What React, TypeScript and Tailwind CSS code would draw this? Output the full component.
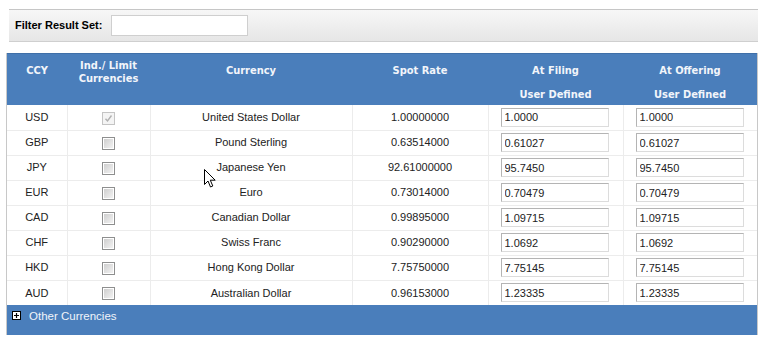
import React from "react";

type Row = {
  ccy: string;
  name: string;
  spot: string;
  filing: string;
  offering: string;
  checked?: boolean;
};

const rows: Row[] = [
  { ccy: "USD", name: "United States Dollar", spot: "1.00000000", filing: "1.0000", offering: "1.0000", checked: true },
  { ccy: "GBP", name: "Pound Sterling", spot: "0.63514000", filing: "0.61027", offering: "0.61027" },
  { ccy: "JPY", name: "Japanese Yen", spot: "92.61000000", filing: "95.7450", offering: "95.7450" },
  { ccy: "EUR", name: "Euro", spot: "0.73014000", filing: "0.70479", offering: "0.70479" },
  { ccy: "CAD", name: "Canadian Dollar", spot: "0.99895000", filing: "1.09715", offering: "1.09715" },
  { ccy: "CHF", name: "Swiss Franc", spot: "0.90290000", filing: "1.0692", offering: "1.0692" },
  { ccy: "HKD", name: "Hong Kong Dollar", spot: "7.75750000", filing: "7.75145", offering: "7.75145" },
  { ccy: "AUD", name: "Australian Dollar", spot: "0.96153000", filing: "1.23335", offering: "1.23335" },
];

function Check({ checked }: { checked?: boolean }) {
  if (checked) {
    return (
      <span className="inline-flex h-[13px] w-[13px] items-center justify-center border border-[#c4c4c4] bg-[#f4f4f4] align-middle">
        <svg width="9" height="9" viewBox="0 0 9 9">
          <path d="M1.5 4.8 L3.5 7 L7.5 1.5" fill="none" stroke="#b0b0b0" strokeWidth="1.4" />
        </svg>
      </span>
    );
  }
  return (
    <span className="inline-block h-[13px] w-[13px] border border-[#8e8f8f] bg-white p-[1px] align-middle">
      <span className="block h-full w-full bg-gradient-to-br from-[#cfcfcf] to-[#f2f2f2]" />
    </span>
  );
}

function RateInput({ value }: { value: string }) {
  return (
    <input
      readOnly
      value={value}
      className="h-[19px] w-[108px] border border-[#b4b4b4] border-b-[#dcdcdc] border-r-[#dcdcdc] bg-white px-[3px] text-[11px] text-[#222] outline-none"
      style={{ fontFamily: '"Liberation Sans", Arial, sans-serif' }}
    />
  );
}

const hd = '"DejaVu Sans Condensed", "DejaVu Sans", Verdana, sans-serif';

export default function App() {
  return (
    <div
      className="relative h-[342px] w-[766px] overflow-hidden bg-white text-[11px] text-[#222]"
      style={{ fontFamily: '"Liberation Sans", Arial, sans-serif' }}
    >
      {/* filter bar */}
      <div className="ml-[9px] mt-[9px] flex h-[33px] w-[749px] items-center gap-[9px] border-y border-t-[#c6c6c6] border-b-[#cfcfcf] bg-gradient-to-b from-[#f7f7f7] to-[#e6e6e6] pl-[6px]">
        <span className="font-bold text-black">Filter Result Set:</span>
        <input className="h-[21px] w-[137px] border border-[#cfcfcf] bg-white outline-none" />
      </div>

      {/* table */}
      <div className="ml-[6px] mt-[11px] w-[752px] border-x border-x-[#c8c8c8]">
        <table className="w-full table-fixed border-collapse">
          <colgroup>
            <col className="w-[60px]" />
            <col className="w-[83px]" />
            <col className="w-[202px]" />
            <col className="w-[136px]" />
            <col className="w-[135px]" />
            <col className="w-[134px]" />
          </colgroup>
          <thead className="bg-[#4a7ebb] text-[11px] font-bold text-[#f2f5fa]" style={{ fontFamily: hd }}>
            <tr className="h-[33px] border-t border-t-[#3f6fa8]">
              <th className="pt-[2px] text-center font-bold">CCY</th>
              <th className="pt-[3px] text-center font-bold leading-[13px]">
                Ind./ Limit
                <br />
                Currencies
              </th>
              <th className="pt-[2px] text-center font-bold">Currency</th>
              <th className="pt-[2px] text-center font-bold">Spot Rate</th>
              <th className="pt-[2px] text-center font-bold">At Filing</th>
              <th className="pt-[2px] text-center font-bold">At Offering</th>
            </tr>
            <tr className="h-[17px]">
              <th />
              <th />
              <th />
              <th />
              <th className="pb-[2px] text-center font-bold">User Defined</th>
              <th className="pb-[2px] text-center font-bold">User Defined</th>
            </tr>
          </thead>
          <tbody>
            {rows.map((r) => (
              <tr key={r.ccy} className="h-[25px] border-b border-b-[#ececec] last:border-b-0">
                <td className="border-r border-r-[#ececec] text-center">{r.ccy}</td>
                <td className="border-r border-r-[#ececec] text-center">
                  <Check checked={r.checked} />
                </td>
                <td className="border-r border-r-[#ececec] text-center">{r.name}</td>
                <td className="border-r border-r-[#ececec] text-center">{r.spot}</td>
                <td className="border-r border-r-[#ececec] pl-[12px]">
                  <RateInput value={r.filing} />
                </td>
                <td className="pl-[12px]">
                  <RateInput value={r.offering} />
                </td>
              </tr>
            ))}
          </tbody>
        </table>
        <div className="flex h-[30px] items-start gap-[8px] bg-[#4a7ebb] pl-[5px] pt-[2px] text-[11.5px] text-[#f0f4fa]">
          <span className="mt-[4px] flex h-[9px] w-[9px] items-center justify-center border border-black bg-white">
            <svg width="7" height="7" viewBox="0 0 7 7">
              <path d="M3.5 1 V6 M1 3.5 H6" stroke="black" strokeWidth="1.2" />
            </svg>
          </span>
          <span className="leading-[18px]">Other Currencies</span>
        </div>
      </div>

      {/* mouse cursor */}
      <svg className="absolute left-[204px] top-[169px]" width="13" height="20" viewBox="0 0 13 20">
        <path
          d="M0.5 0.5 V15.5 L4 12 L6.5 18 L8.8 17 L6.3 11.2 H11.2 Z"
          fill="white"
          stroke="black"
          strokeWidth="1"
          strokeLinejoin="miter"
        />
      </svg>
    </div>
  );
}
